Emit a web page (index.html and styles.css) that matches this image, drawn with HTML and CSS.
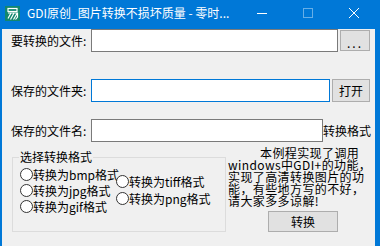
FILE: index.html
```html
<!DOCTYPE html>
<html lang="zh-CN">
<head>
  <meta charset="UTF-8" />
  <title>GDI原创_图片转换不损坏质量</title>
  <link rel="stylesheet" href="styles.css">
</head>
<body>
  <div class="window">
    <div class="titlebar">
      <svg class="app-icon" viewBox="0 0 15 15">
        <rect width="15" height="15" fill="#12876f"/>
        <rect x="3" y="2.5" width="9" height="3" fill="none" stroke="#fff" stroke-width="1.2"/>
        <path d="M3 7h9.5v4l-2 2.5M6 7l-3 5.5M9 7l-3.5 6.5M12 7.5l-3.5 6" fill="none" stroke="#fff" stroke-width="1.2"/>
      </svg>
      <span class="title">GDI原创_图片转换不损坏质量 - 零时...</span>
      <div class="caption-buttons">
        <span class="cap-btn">
          <svg viewBox="0 0 10 10"><path d="M0 5.5h10" stroke="#fff" stroke-width="1"/></svg>
        </span>
        <span class="cap-btn cap-disabled">
          <svg viewBox="0 0 10 10"><rect x="0.5" y="0.5" width="9" height="9" fill="none" stroke="#fff" stroke-width="1"/></svg>
        </span>
        <span class="cap-btn">
          <svg viewBox="0 0 10 10"><path d="M0 0l10 10M10 0L0 10" stroke="#fff" stroke-width="1"/></svg>
        </span>
      </div>
    </div>

    <div class="client">
      <div class="row row-file">
        <label class="field-label">要转换的文件:</label>
        <input class="field field-file" type="text">
        <button class="btn btn-browse">...</button>
      </div>

      <div class="row row-folder">
        <label class="field-label">保存的文件夹:</label>
        <input class="field field-folder" type="text">
        <button class="btn btn-open">打开</button>
      </div>

      <div class="row row-name">
        <label class="field-label">保存的文件名:</label>
        <input class="field field-name" type="text">
        <span class="format-label">转换格式</span>
      </div>

      <div class="bottom">
        <fieldset class="format-group">
          <legend>选择转换格式</legend>
          <div class="radio-cols">
            <div class="radio-col">
              <label class="radio"><span class="dot"></span>转换为bmp格式</label>
              <label class="radio"><span class="dot"></span>转换为jpg格式</label>
              <label class="radio"><span class="dot"></span>转换为gif格式</label>
            </div>
            <div class="radio-col radio-col-2">
              <label class="radio"><span class="dot"></span>转换为tiff格式</label>
              <label class="radio"><span class="dot"></span>转换为png格式</label>
            </div>
          </div>
        </fieldset>

        <div class="about">
          <p class="about-text"><span class="indent">本例程实现了调用</span><br>windows中GDI+的功能，<br>实现了高清转换图片的功<br>能，有些地方写的不好，<br>请大家多多谅解!</p>
          <button class="btn btn-convert">转换</button>
        </div>
      </div>
    </div>
  </div>
</body>
</html>
```

FILE: styles.css
```css
* {
  box-sizing: border-box;
  margin: 0;
  padding: 0;
}
body {
  font-family: "Noto Sans CJK SC", sans-serif;
  font-size: 12px;
  color: #000;
  background: #0078d7;
  width: 380px;
  height: 246px;
  overflow: hidden;
}
.titlebar {
  height: 26px;
  display: flex;
  align-items: center;
  color: #fff;
}
.app-icon {
  width: 15px;
  height: 15px;
  margin-left: 5px;
  margin-right: 7px;
  flex: none;
}
.title {
  flex: 1;
  line-height: 16px;
  white-space: nowrap;
}
.caption-buttons {
  display: flex;
  margin-right: 3px;
}
.cap-btn {
  width: 46px;
  height: 26px;
  display: flex;
  align-items: center;
  justify-content: center;
}
.cap-btn svg {
  width: 10px;
  height: 10px;
}
.cap-disabled {
  opacity: 0.4;
}
.client {
  background: #f0f0f0;
  margin: 0 5px 0 2px;
  height: 217px;
}
.row {
  display: flex;
  align-items: center;
  height: 23px;
  padding-left: 9px;
}
.row-file {
  margin-top: 3px;
}
.row-folder {
  margin-top: 27px;
}
.row-name {
  margin-top: 17px;
}
.field-label {
  width: 80px;
  white-space: nowrap;
}
.field {
  height: 23px;
  border: 1px solid #7a7a7a;
  background: #fff;
  outline: none;
}
.field-file {
  width: 247px;
}
.field-folder {
  width: 239px;
  border-color: #0078d7;
}
.field-name {
  width: 232px;
}
.format-label {
  white-space: nowrap;
}
.btn {
  background: #e1e1e1;
  border: 1px solid #adadad;
  font: inherit;
  color: #000;
}
.btn-browse {
  width: 30px;
  height: 21px;
  margin-left: 2px;
  letter-spacing: 2px;
  padding-top: 3px;
}
.btn-open {
  width: 38px;
  height: 23px;
  margin-left: 2px;
}
.bottom {
  display: flex;
  align-items: flex-start;
  margin-top: 5px;
  padding-left: 10px;
}
.format-group {
  width: 214px;
  min-inline-size: 0;
  margin-top: 3px;
  border: 1px solid #dcdcdc;
  padding: 0 0 17px 7px;
}
.format-group legend {
  line-height: 14px;
  padding: 0 1px;
  margin-left: -1px;
}
.radio-cols {
  display: flex;
  margin-top: 2px;
}
.radio-col {
  width: 96px;
}
.radio-col-2 {
  padding-top: 7px;
}
.radio {
  display: flex;
  align-items: center;
  height: 16px;
  white-space: nowrap;
}
.radio-col-2 .radio + .radio {
  margin-top: 1px;
}
.dot {
  width: 13px;
  height: 13px;
  border: 1px solid #333;
  border-radius: 50%;
  background: #fff;
  flex: none;
}
.about {
  width: 142px;
  margin-left: 2px;
}
.about-text {
  font-size: 12px;
  line-height: 12px;
  letter-spacing: 0.4px;
  white-space: nowrap;
}
.indent {
  padding-left: 32px;
}
.btn-convert {
  display: block;
  width: 70px;
  height: 21px;
  margin: 4px 0 0 40px;
}
```
